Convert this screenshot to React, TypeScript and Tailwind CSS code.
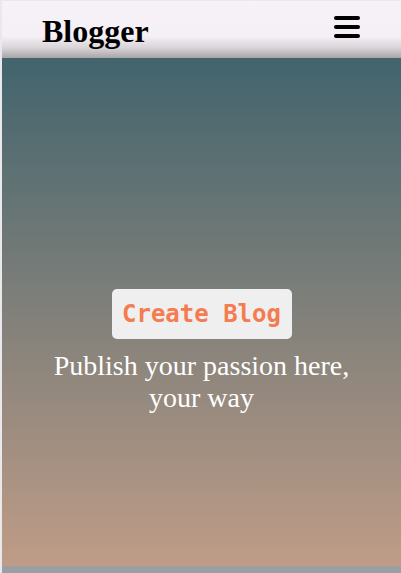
import React from "react";

export default function App() {
  return (
    <div className="w-[401px] h-[573px] overflow-hidden bg-[#9c9fa2] flex flex-col border-l-2 border-t border-[#e9e9ec]">
      <header className="h-[57px] shrink-0 flex items-center justify-between pl-[40px] pr-[40px] bg-[linear-gradient(to_bottom,#f7f2f7_0%,#f5f0f5_62%,#d8d4d8_82%,#a9a5a7_100%)]">
        <h1 className="text-[32px] font-bold text-black leading-none mt-[3px] font-['Liberation_Serif',serif]">
          Blogger
        </h1>
        <svg width="28" height="24" viewBox="0 0 28 24" className="mt-[-6px]">
          <rect x="1" y="1" width="26" height="4" rx="2" fill="#000" />
          <rect x="1" y="10" width="26" height="4" rx="2" fill="#000" />
          <rect x="1" y="19" width="26" height="4" rx="2" fill="#000" />
        </svg>
      </header>
      <main className="h-[508px] shrink-0 flex flex-col items-center pt-[231px] bg-[linear-gradient(to_bottom,#42646d,#bf9c87)]">
        <button className="w-[180px] h-[50px] rounded-[5px] bg-[#efefef] text-[#f47c50] text-[24px] font-bold font-['DejaVu_Sans_Mono',monospace]">
          Create Blog
        </button>
        <p className="mt-[11px] text-white text-[28px] leading-[32px] text-center w-[360px] font-['Liberation_Serif',serif]">
          Publish your passion here,
          <br />
          your way
        </p>
      </main>
    </div>
  );
}
